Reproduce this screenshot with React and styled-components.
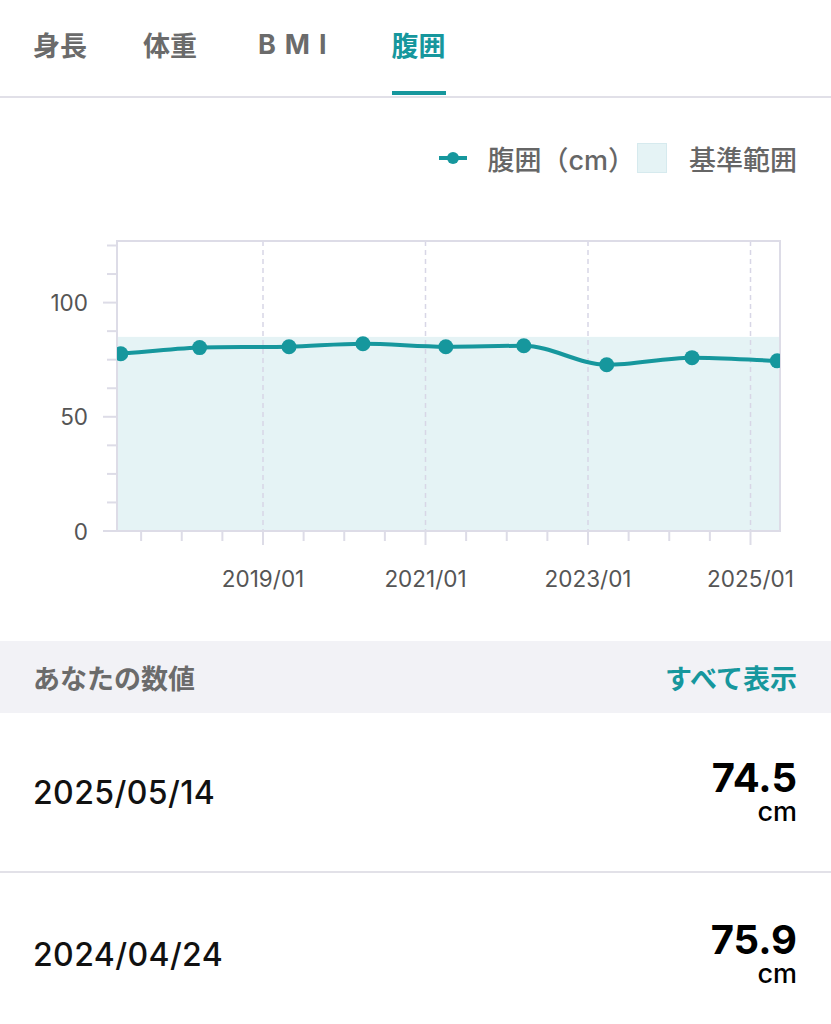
import React, { useState } from "react";
import styled, { createGlobalStyle } from "styled-components";

const TEAL = "#16979d";

const GlobalStyle = createGlobalStyle`
  html, body {
    margin: 0;
    padding: 0;
    background: #ffffff;
  }
  body {
    font-family: Inter, "Noto Sans CJK JP", sans-serif;
    -webkit-font-smoothing: antialiased;
  }
`;

const tabs = ["身長", "体重", "BMI", "腹囲"];

const records = [
  { date: "2025/05/14", value: "74.5" },
  { date: "2024/04/24", value: "75.9" },
];

// measurement history (year as decimal, value in cm)
const points = [
  { t: 2017.25, v: 77.6 },
  { t: 2018.22, v: 80.3 },
  { t: 2019.32, v: 80.7 },
  { t: 2020.23, v: 82.0 },
  { t: 2021.25, v: 80.7 },
  { t: 2022.21, v: 81.1 },
  { t: 2023.23, v: 72.8 },
  { t: 2024.28, v: 75.9 },
  { t: 2025.33, v: 74.5 },
];

const plot = { left: 117, right: 780, top: 241, bottom: 531 };
const xOf = (t) => 263 + (t - 2019) * 81.25;
const yOf = (v) => plot.bottom - v * 2.284;

function monotonePath(pts) {
  const n = pts.length;
  const d = [];
  for (let i = 0; i < n - 1; i++) {
    d.push((pts[i + 1].y - pts[i].y) / (pts[i + 1].x - pts[i].x));
  }
  const m = pts.map((_, i) => {
    if (i === 0) return d[0];
    if (i === n - 1) return d[n - 2];
    if (d[i - 1] * d[i] <= 0) return 0;
    return (d[i - 1] + d[i]) / 2;
  });
  let path = `M${pts[0].x},${pts[0].y}`;
  for (let i = 0; i < n - 1; i++) {
    const h = (pts[i + 1].x - pts[i].x) / 3;
    path += ` C${pts[i].x + h},${pts[i].y + m[i] * h} ${pts[i + 1].x - h},${
      pts[i + 1].y - m[i + 1] * h
    } ${pts[i + 1].x},${pts[i + 1].y}`;
  }
  return path;
}

function Chart() {
  const pts = points.map((p) => ({ x: xOf(p.t), y: yOf(p.v) }));
  const yTicks = [];
  for (let v = 0; v <= 125; v += 12.5) yTicks.push(v);
  const xTicks = [];
  for (let t = 2017.5; t <= 2025.2; t += 0.5) xTicks.push(t);
  const majors = [2019, 2021, 2023, 2025];

  return (
    <ChartSvg viewBox="0 178 831 420" width="831" height="420">
      <defs>
        <clipPath id="plotClip">
          <rect
            x={plot.left}
            y={plot.top}
            width={plot.right - plot.left}
            height={plot.bottom - plot.top}
          />
        </clipPath>
      </defs>

      <rect
        x={plot.left}
        y={yOf(85)}
        width={plot.right - plot.left}
        height={plot.bottom - yOf(85)}
        fill="#e5f3f5"
      />

      {majors.map((t) => (
        <line
          key={t}
          x1={xOf(t)}
          x2={xOf(t)}
          y1={plot.top}
          y2={plot.bottom}
          stroke="#d8d6e6"
          strokeWidth="1.5"
          strokeDasharray="5 4"
        />
      ))}

      <rect
        x={plot.left}
        y={plot.top}
        width={plot.right - plot.left}
        height={plot.bottom - plot.top}
        fill="none"
        stroke="#dddce7"
        strokeWidth="2"
      />

      {yTicks.map((v) => {
        const major = v % 50 === 0;
        return (
          <line
            key={v}
            x1={major ? 103 : 107}
            x2={plot.left}
            y1={yOf(v)}
            y2={yOf(v)}
            stroke="#dddce7"
            strokeWidth="2"
          />
        );
      })}
      {[0, 50, 100].map((v) => (
        <AxisText key={v} x="88" y={yOf(v)} textAnchor="end" dominantBaseline="central">
          {v}
        </AxisText>
      ))}

      {xTicks.map((t) => {
        const major = majors.some((m) => Math.abs(m - t) < 0.01);
        return (
          <line
            key={t}
            x1={xOf(t)}
            x2={xOf(t)}
            y1={plot.bottom}
            y2={major ? 545 : 541}
            stroke="#dddce7"
            strokeWidth="2"
          />
        );
      })}
      {majors.map((t) => (
        <AxisText key={t} x={xOf(t)} y="578" textAnchor="middle" dominantBaseline="central">
          {`${t}/01`}
        </AxisText>
      ))}

      <g clipPath="url(#plotClip)">
        <path d={monotonePath(pts)} fill="none" stroke={TEAL} strokeWidth="4" />
        {pts.map((p, i) => (
          <circle key={i} cx={p.x} cy={p.y} r="7.5" fill={TEAL} />
        ))}
      </g>
    </ChartSvg>
  );
}

export default function App() {
  const [active, setActive] = useState(3);

  return (
    <>
      <GlobalStyle />
      <Page>
        <TabBar>
          {tabs.map((label, i) => (
            <Tab
              key={label}
              $active={i === active}
              $spaced={label === "BMI"}
              onClick={() => setActive(i)}
            >
              {label}
            </Tab>
          ))}
        </TabBar>

        <Legend>
          <LegendItem>
            <svg width="28" height="16" viewBox="0 0 28 16">
              <line x1="0" y1="8" x2="28" y2="8" stroke={TEAL} strokeWidth="4" />
              <circle cx="14" cy="8" r="6" fill={TEAL} />
            </svg>
            <LegendLabel>腹囲（cm）</LegendLabel>
          </LegendItem>
          <LegendItem>
            <Swatch />
            <LegendLabel>基準範囲</LegendLabel>
          </LegendItem>
        </Legend>

        <Chart />

        <SectionHeader>
          <SectionTitle>あなたの数値</SectionTitle>
          <ShowAll>すべて表示</ShowAll>
        </SectionHeader>

        {records.map((r) => (
          <Row key={r.date}>
            <DateText>{r.date}</DateText>
            <ValueBlock>
              <Value>{r.value}</Value>
              <Unit>cm</Unit>
            </ValueBlock>
          </Row>
        ))}
      </Page>
    </>
  );
}

const Page = styled.div`
  width: 831px;
  min-height: 1024px;
  overflow: hidden;
  background: #fff;
`;

const TabBar = styled.nav`
  display: flex;
  gap: 56px;
  height: 96px;
  padding-left: 33px;
  border-bottom: 2px solid #e1e0e8;
`;

const Tab = styled.div`
  position: relative;
  display: flex;
  align-items: center;
  padding-bottom: 8px;
  padding-left: ${(p) => (p.$spaced ? "5px" : "0")};
  font-size: 27px;
  font-weight: 700;
  letter-spacing: ${(p) => (p.$spaced ? "9px" : "0")};
  color: ${(p) => (p.$active ? TEAL : "#6b6b6b")};
  cursor: pointer;

  &::after {
    content: "";
    display: ${(p) => (p.$active ? "block" : "none")};
    position: absolute;
    left: 0;
    right: 0;
    bottom: 1px;
    height: 4px;
    background: ${TEAL};
  }
`;

const Legend = styled.div`
  display: flex;
  justify-content: flex-end;
  align-items: center;
  gap: 2px;
  height: 40px;
  margin-top: 40px;
  padding-right: 34px;
`;

const LegendItem = styled.div`
  display: flex;
  align-items: center;
  gap: 20px;
`;

const LegendLabel = styled.span`
  font-size: 27px;
  font-weight: 500;
  color: #666666;
`;

const Swatch = styled.span`
  width: 28px;
  height: 28px;
  margin-right: 2px;
  background: #e5f3f5;
  border: 1px solid #d6eaee;
`;

const ChartSvg = styled.svg`
  display: block;
`;

const AxisText = styled.text`
  font-family: Inter, sans-serif;
  font-size: 22.5px;
  fill: #555555;
`;

const SectionHeader = styled.div`
  display: flex;
  justify-content: space-between;
  align-items: center;
  height: 72px;
  margin-top: 43px;
  padding: 0 34px 0 33px;
  background: #f2f2f6;
`;

const SectionTitle = styled.span`
  font-size: 27px;
  font-weight: 700;
  color: #6b6b6b;
`;

const ShowAll = styled.span`
  font-size: 27px;
  font-weight: 700;
  color: ${TEAL};
  cursor: pointer;
`;

const Row = styled.div`
  display: flex;
  justify-content: space-between;
  align-items: center;
  height: 158px;
  padding: 0 34px 0 33px;
  border-bottom: 2px solid #e2e1e8;

  & + & {
    padding-top: 2px;
  }
`;

const DateText = styled.span`
  font-size: 32px;
  font-weight: 500;
  letter-spacing: 0.4px;
  color: #111111;
`;

const ValueBlock = styled.div`
  display: flex;
  flex-direction: column;
  align-items: flex-end;
`;

const Value = styled.span`
  font-size: 40px;
  font-weight: 700;
  line-height: 40px;
  color: #000;
`;

const Unit = styled.span`
  font-size: 27px;
  font-weight: 500;
  line-height: 28px;
  color: #000;
`;
